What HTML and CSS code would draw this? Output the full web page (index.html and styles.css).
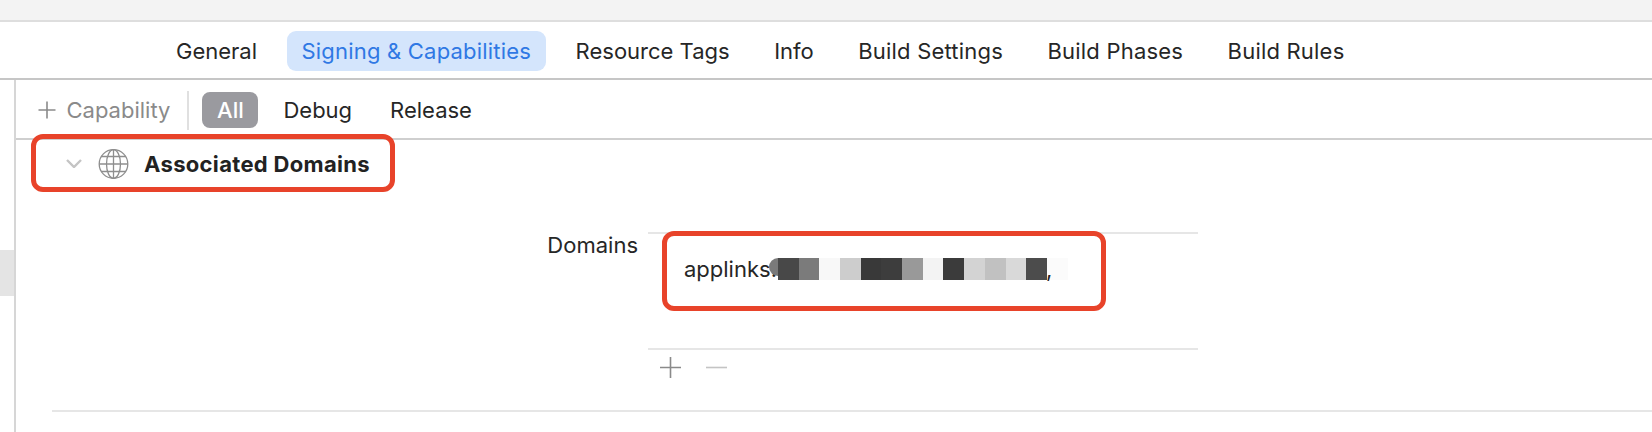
FILE: index.html
```html
<!DOCTYPE html>
<html lang="en">
<head>
<meta charset="utf-8">
<title>Signing &amp; Capabilities</title>
<link rel="stylesheet" href="styles.css">
</head>
<body>
<div class="titlebar"></div>
<nav class="tabs">
  <span class="tab">General</span>
  <span class="tab tab-wide tab-active">Signing &amp; Capabilities</span>
  <span class="tab">Resource Tags</span>
  <span class="tab">Info</span>
  <span class="tab tab-wide">Build Settings</span>
  <span class="tab tab-wide">Build Phases</span>
  <span class="tab tab-wide">Build Rules</span>
</nav>
<div class="main">
  <aside class="side"><div class="side-mark"></div></aside>
  <section class="content">
    <div class="toolbar">
      <div class="add-cap">
        <svg class="add-icon" viewBox="0 0 18 18"><path d="M9 0.5V17.5M0.5 9H17.5"/></svg>
        <span>Capability</span>
      </div>
      <div class="divider"></div>
      <span class="filter filter-active">All</span>
      <span class="filter">Debug</span>
      <span class="filter">Release</span>
    </div>
    <div class="cap-head">
      <svg class="chevron" viewBox="0 0 16 9"><path d="M1 1L8 8L15 1"/></svg>
      <svg class="globe" viewBox="0 0 31 30">
        <circle cx="15.5" cy="15" r="14.3"/>
        <ellipse cx="15.5" cy="15" rx="7" ry="14.3"/>
        <path d="M15.5 0.7V29.3M1.2 15H29.8M3.4 7.5H27.6M3.4 22.5H27.6"/>
      </svg>
      <span class="cap-title">Associated Domains</span>
      <div class="annot annot-head"></div>
    </div>
    <div class="form">
      <div class="form-label">Domains</div>
      <div class="list-wrap">
        <div class="list">
          <div class="list-row">
            <span class="domain">applinks:</span>
            <div class="mosaic">
              <i class="cell" style="background:#484848"></i>
              <i class="cell" style="background:#7b7b7b"></i>
              <i class="cell" style="background:#f8f8f8"></i>
              <i class="cell" style="background:#cdcdcd"></i>
              <i class="cell" style="background:#393939"></i>
              <i class="cell" style="background:#3d3d3d"></i>
              <i class="cell" style="background:#999999"></i>
              <i class="cell" style="background:#f3f3f3"></i>
              <i class="cell" style="background:#3b3b3b"></i>
              <i class="cell" style="background:#d3d3d3"></i>
              <i class="cell" style="background:#c1c1c1"></i>
              <i class="cell" style="background:#d9d9d9"></i>
              <i class="cell" style="background:#4c4c4c"></i>
              <i class="cell" style="background:#fbfbfb"></i>
              <span class="tail">,</span>
            </div>
          </div>
          <div class="annot annot-list"></div>
        </div>
        <div class="list-controls">
          <svg class="ctl ctl-plus" viewBox="0 0 21 21"><path d="M10.5 0V21M0 10.5H21"/></svg>
          <svg class="ctl ctl-minus" viewBox="0 0 21 21"><path d="M0 10.5H21"/></svg>
        </div>
      </div>
    </div>
    <div class="section-end"></div>
  </section>
</div>
</body>
</html>
```
FILE: styles.css
```css
* { box-sizing: border-box; }
html, body { margin: 0; padding: 0; }
body {
  width: 1652px;
  height: 432px;
  overflow: hidden;
  background: #fff;
  color: #262626;
  font-family: Inter, "Noto Sans", sans-serif;
  font-size: 22px;
}
.titlebar {
  height: 22px;
  background: #f3f3f3;
  border-bottom: 2px solid #dedede;
}
.tabs {
  height: 58px;
  padding: 9px 0 7px 161px;
  display: flex;
  gap: 14.5px;
  align-items: stretch;
  border-bottom: 2px solid #c6c6c6;
}
.tab {
  display: flex;
  align-items: center;
  padding: 0 15px;
  border-radius: 9px;
}
.tab-wide { letter-spacing: 0.2px; }
.tab-active {
  background: #d4e5fc;
  color: #2f78e4;
}
.main {
  display: flex;
  height: 352px;
}
.side {
  width: 16px;
  flex: none;
  border-right: 2px solid #d6d6d6;
  padding-top: 170px;
}
.side-mark {
  height: 46px;
  background: #e4e4e4;
}
.content { flex: 1; min-width: 0; }
.toolbar {
  height: 60px;
  border-bottom: 2px solid #cfcfcf;
  display: flex;
  align-items: center;
  padding: 2px 0 0 21.5px;
}
.add-cap {
  display: flex;
  align-items: center;
  gap: 11px;
  color: #8a8a8a;
}
.add-icon { width: 18px; height: 18px; }
.add-icon path { stroke: #8a8a8a; stroke-width: 1.6; fill: none; }
.divider {
  width: 2px;
  height: 39px;
  background: #e0e0e0;
  margin: 0 13px 0 17px;
}
.filter {
  height: 36px;
  display: flex;
  align-items: center;
  padding: 0 13px;
  margin-right: 12px;
  border-radius: 8px;
}
.filter-active {
  width: 56px;
  justify-content: center;
  padding: 0;
  background: #9a9a9f;
  color: #fff;
  font-weight: 500;
  margin-right: 12px;
}
.cap-head {
  position: relative;
  height: 48px;
  display: flex;
  align-items: center;
  padding-left: 50px;
}
.chevron { width: 16px; height: 9px; margin-top: -1px; }
.chevron path { stroke: #c4c4c4; stroke-width: 2.4; fill: none; }
.globe { width: 31px; height: 30px; margin-left: 16px; }
.globe circle, .globe ellipse, .globe path { stroke: #8e8e8e; stroke-width: 1.3; fill: none; }
.cap-title {
  margin-left: 15px;
  font-weight: 700;
  color: #222;
  letter-spacing: 0.32px;
}
.annot {
  position: absolute;
  border: 5px solid #e8432a;
  border-radius: 12px;
}
.annot-head {
  left: 15px;
  top: -6px;
  width: 364px;
  height: 58px;
}
.form {
  display: flex;
  align-items: flex-start;
  margin-top: 44px;
  padding-left: 527px;
}
.form-label {
  width: 95px;
  flex: none;
  text-align: right;
  margin-right: 10px;
  line-height: 26px;
}
.list-wrap { width: 550px; }
.list {
  position: relative;
  height: 118px;
  border-top: 2px solid #e6e6e6;
  border-bottom: 2px solid #e6e6e6;
}
.list-row {
  display: flex;
  align-items: center;
  padding: 0 0 0 36px;
  height: 70px;
}
.mosaic {
  display: flex;
  height: 22px;
  margin-left: 1px;
  position: relative;
}
.mosaic::before {
  content: "";
  position: absolute;
  left: -9px;
  top: 0;
  width: 18px;
  height: 18px;
  border-radius: 9px 0 0 9px;
  background: #7a7a7a;
}
.cell {
  display: block;
  position: relative;
  width: 20.7px;
  height: 22px;
}
.tail {
  position: absolute;
  left: 268px;
  top: 0;
  line-height: 22px;
}
.annot-list {
  left: 14px;
  top: -3px;
  width: 444px;
  height: 80px;
}
.list-controls {
  display: flex;
  align-items: center;
  gap: 25px;
  padding: 7px 0 0 12px;
}
.ctl { width: 21px; height: 21px; }
.ctl path { fill: none; stroke-width: 1.6; }
.ctl-plus path { stroke: #8a8a8a; }
.ctl-minus path { stroke: #c4c4c4; }
.section-end {
  height: 2px;
  background: #e6e6e6;
  margin: 32px 0 0 36px;
}
```
